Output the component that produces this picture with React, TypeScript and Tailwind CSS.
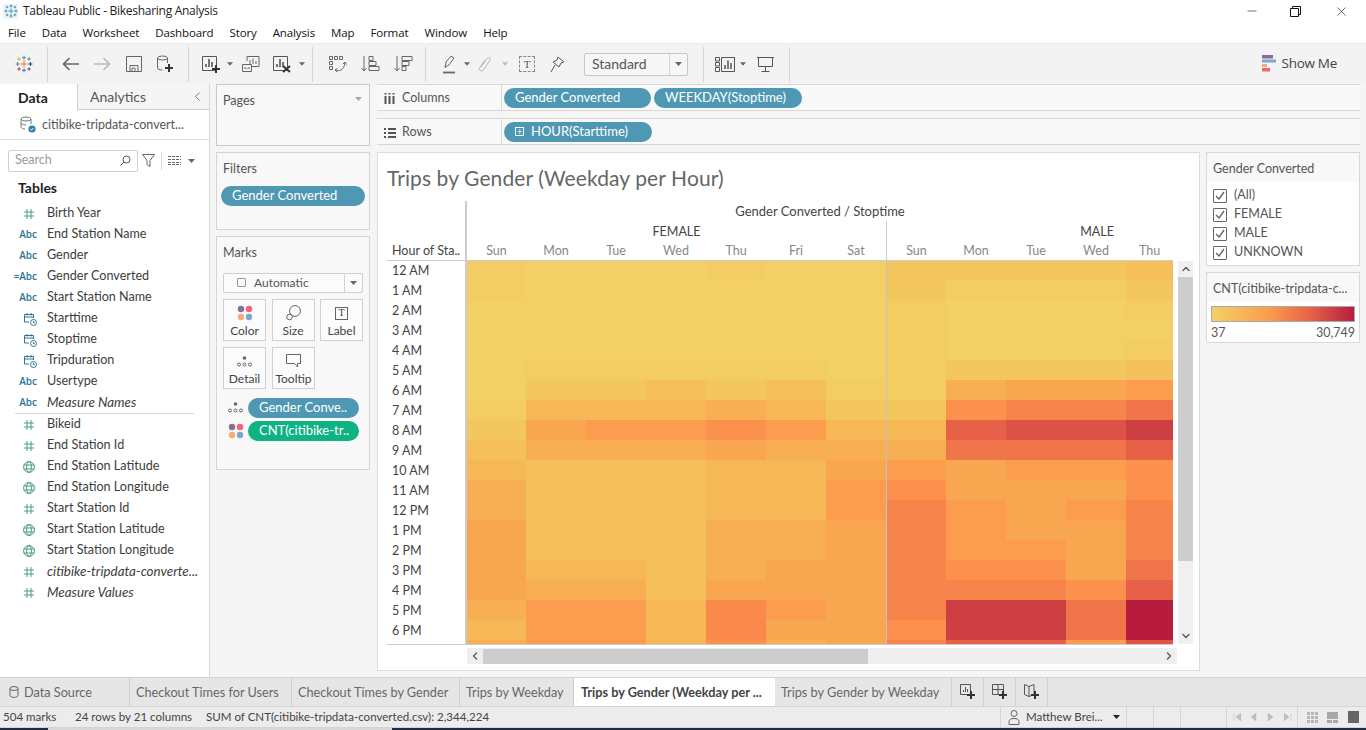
import React from "react";
import { ChevronDown, ChevronLeft, ChevronRight, ChevronUp, Minus, X } from "lucide-react";

// Colour ramp of the heatmap, light to dark
const ramp: Record<string, string> = {
  a: "#f3d066", b: "#f3cc63", c: "#f4c65e", d: "#f5c05a", e: "#f6b756",
  f: "#f8ae53", g: "#f9a650", h: "#fb9c4e", i: "#fb914c", p: "#f98a4c", j: "#f6844b",
  k: "#f0754a", l: "#e66147", m: "#dd5346", n: "#cd3f43", o: "#b71c3e",
};

// One row per hour: 7 female days, then 5 male days
const heat = [
  "baaabaa ccccd", "baaaaaa cbbbc", "aaaaaaa baaab", "aaaaaaa baaaa", "aaaaaaa baaab",
  "abbbbba bcccd", "accdcdb bfggh", "beeefec cijjk", "cghhihe elmmn", "dfffgff fkkkl",
  "edddeeg hghhi", "fdddeeh igggi", "fdddeeh jhghj", "gdddffg jhggj",
  "gdddffg jhhgj", "geedfgg jiigk", "gffdggg jjjil", "fhhephg jnnko", "ehhepgg innko", "fhheifg jllhm",
];

const hours = ["12 AM", "1 AM", "2 AM", "3 AM", "4 AM", "5 AM", "6 AM", "7 AM", "8 AM", "9 AM", "10 AM", "11 AM", "12 PM", "1 PM", "2 PM", "3 PM", "4 PM", "5 PM", "6 PM"];
const femaleW = [59, 60, 60, 60, 60, 60, 60];
const maleW = [59, 60, 60, 60, 47];

const tables: [string, string, boolean?][] = [
  ["num", "Birth Year"], ["abc", "End Station Name"], ["abc", "Gender"], ["calc", "Gender Converted"],
  ["abc", "Start Station Name"], ["date", "Starttime"], ["date", "Stoptime"], ["date", "Tripduration"],
  ["abc", "Usertype"], ["abc", "Measure Names", true],
];
const measures: [string, string, boolean?][] = [
  ["num", "Bikeid"], ["num", "End Station Id"], ["geo", "End Station Latitude"], ["geo", "End Station Longitude"],
  ["num", "Start Station Id"], ["geo", "Start Station Latitude"], ["geo", "Start Station Longitude"],
  ["num", "citibike-tripdata-converte...", true], ["num", "Measure Values", true],
];

const Caret = ({ color = "#666" }: { color?: string }) => (
  <svg width="7" height="4" viewBox="0 0 7 4"><path d="M0 0h7L3.5 4z" fill={color} /></svg>
);

const Dots = () => (
  <svg width="16" height="16" viewBox="0 0 16 16">
    <circle cx="4" cy="4" r="3.2" fill="#8c6d99" />
    <circle cx="12" cy="4" r="3.2" fill="#f0656f" />
    <circle cx="4" cy="12" r="3.2" fill="#f5ab78" />
    <circle cx="12" cy="12" r="3.2" fill="#7ea6cc" />
  </svg>
);

const DetailDots = () => (
  <svg width="15" height="11" viewBox="0 0 15 11" fill="none" stroke="#666">
    <circle cx="7.5" cy="2" r="1.8" fill="#666" stroke="none" />
    <circle cx="2" cy="8.5" r="1.5" />
    <circle cx="7.5" cy="8.5" r="1.5" />
    <circle cx="13" cy="8.5" r="1.5" />
  </svg>
);

const TableauMark = ({ multi = false, size = 18 }: { multi?: boolean; size?: number }) => {
  const crosses: [number, number, number, string][] = [
    [9, 9, 3.4, multi ? "#e8762c" : "#2d7fa8"],
    [9, 2.6, 2, multi ? "#5b879b" : "#2d7fa8"],
    [9, 15.4, 2, multi ? "#4e79a7" : "#2d7fa8"],
    [2.6, 9, 2, multi ? "#59879b" : "#2d7fa8"],
    [15.4, 9, 2, multi ? "#1f3f66" : "#2d7fa8"],
    [4, 4, 1.6, multi ? "#e0a32e" : "#2d7fa8"],
    [14, 4, 1.6, multi ? "#4e7fa8" : "#2d7fa8"],
    [4, 14, 1.6, multi ? "#c72037" : "#2d7fa8"],
    [14, 14, 1.6, multi ? "#5a3f86" : "#2d7fa8"],
  ];
  return (
    <svg width={size} height={size} viewBox="0 0 18 18" strokeWidth="1">
      {crosses.map(([x, y, r, c], i) => (
        <g key={i} stroke={c}>
          <path d={`M${x - r} ${y}h${r * 2}M${x} ${y - r}v${r * 2}`} />
        </g>
      ))}
    </svg>
  );
};

const FieldIcon = ({ type }: { type: string }) => {
  if (type === "abc" || type === "calc") {
    return <span className="text-[10px] font-semibold text-[#2f7493] font-['Open_Sans',sans-serif]">{type === "calc" ? "=Abc" : "Abc"}</span>;
  }
  if (type === "num") {
    return (
      <svg width="10" height="10" viewBox="0 0 10 10" className="mr-[3px]" stroke="#4a9f7f" fill="none">
        <path d="M3 0v10M7 0v10M0 3h10M0 7h10" />
      </svg>
    );
  }
  if (type === "geo") {
    return (
      <svg width="12" height="12" viewBox="0 0 12 12" className="mr-[2px]" stroke="#4a9f7f" fill="none">
        <circle cx="6" cy="6" r="5.4" />
        <ellipse cx="6" cy="6" rx="2.4" ry="5.4" />
        <path d="M.6 4h10.8M.6 8h10.8" />
      </svg>
    );
  }
  return (
    <svg width="14" height="14" viewBox="0 0 14 14" stroke="#2f7493" fill="none">
      <path d="M6 10H1.5V2.5h9V6M1.5 5h9M4 1v2.5M8 1v2.5" />
      <circle cx="10.5" cy="10.5" r="3" />
      <path d="M10.5 9v1.7h1.4" />
    </svg>
  );
};

const FieldRow = ({ type, name, italic }: { type: string; name: string; italic?: boolean }) => (
  <div className="flex h-[21px] items-center">
    <div className="flex w-[37px] justify-end"><FieldIcon type={type} /></div>
    <span className={`ml-[10px] whitespace-nowrap text-[#3d3d3d] ${italic ? "text-[13.4px] italic" : "text-[12.6px]"}`}>{name}</span>
  </div>
);

const Pill = ({ className, children }: { className: string; children: React.ReactNode }) => (
  <div className={`flex h-[20px] items-center rounded-full text-[13px] leading-none text-white ${className}`}>{children}</div>
);

const MarkButton = ({ label, icon }: { label: string; icon: React.ReactNode }) => (
  <div className="flex h-[42px] w-[43px] flex-col items-center border border-[#cfcfcf] bg-[#fbfbfb]">
    <div className="flex h-[24px] items-center pt-[3px]">{icon}</div>
    <span className="text-[12px] leading-[14px] text-[#444]">{label}</span>
  </div>
);

const ToolBtn = ({ className, children }: { className: string; children: React.ReactNode }) => (
  <div className={`flex shrink-0 items-center justify-center ${className}`}>{children}</div>
);

const Sep = ({ className = "" }: { className?: string }) => <div className={`h-[35px] w-px shrink-0 bg-[#d4d4d4] ${className}`} />;

const ChartGlyph = ({ stroke = "#555" }: { stroke?: string }) => (
  <g fill="none" stroke={stroke}>
    <path d="M1.5 1.5h14v14h-14z" />
    <path d="M5 12V9M8 12V4M11 12V7" strokeWidth="1.6" />
  </g>
);

const PlusBadge = ({ x, y }: { x: number; y: number }) => (
  <path d={`M${x - 4} ${y}h8M${x} ${y - 4}v8`} stroke="#333" strokeWidth="2" fill="none" />
);

const Toolbar = () => (
  <div className="flex h-[41px] shrink-0 items-center border-t border-[#ececec] bg-[#f3f3f3] text-[#555]">
    <ToolBtn className="w-[47px]"><TableauMark multi /></ToolBtn>
    <Sep />
    <ToolBtn className="ml-[6px] w-[32px]">
      <svg width="17" height="14" viewBox="0 0 17 14" fill="none" stroke="#666" strokeWidth="1.7"><path d="M17 7H2M7.5 1 1.5 7l6 6" /></svg>
    </ToolBtn>
    <ToolBtn className="w-[32px]">
      <svg width="17" height="14" viewBox="0 0 17 14" fill="none" stroke="#bbb" strokeWidth="1.7"><path d="M0 7h15M9.5 1l6 6-6 6" /></svg>
    </ToolBtn>
    <ToolBtn className="w-[31px]">
      <svg width="16" height="16" viewBox="0 0 16 16" fill="none" stroke="#666"><path d="M.5.5h15v15H.5z" /><path d="M4 15V9.5h8V15M6 15v-3h3v3" /></svg>
    </ToolBtn>
    <ToolBtn className="w-[32px]">
      <svg width="18" height="18" viewBox="0 0 18 18" fill="none" stroke="#666"><ellipse cx="6.5" cy="3" rx="5" ry="2" /><path d="M1.5 3v10c0 1 2 2 5 2M11.5 3v5" /><PlusBadge x={13} y={13} /></svg>
    </ToolBtn>
    <Sep className="ml-[7px]" />
    <ToolBtn className="ml-[5px] w-[33px]">
      <svg width="20" height="18" viewBox="0 0 20 18"><ChartGlyph /><PlusBadge x={15} y={14} /></svg>
    </ToolBtn>
    <ToolBtn className="w-[6px]"><Caret /></ToolBtn>
    <ToolBtn className="ml-[3px] w-[30px]">
      <svg width="18" height="16" viewBox="0 0 18 16" fill="none" stroke="#666"><path d="M5 5V.5h12v10H10" /><path d="M8 8V4M11 8V2.5M14 8V5" /><path d="M.5 8.5h9v7h-9zM3 13v-2M5 13v-1M7 13v-2" /></svg>
    </ToolBtn>
    <ToolBtn className="w-[31px]">
      <svg width="20" height="18" viewBox="0 0 20 18"><ChartGlyph /><path d="m11 11 7 6m0-6-7 6" stroke="#333" strokeWidth="2" fill="none" /></svg>
    </ToolBtn>
    <ToolBtn className="ml-[2px] w-[6px]"><Caret /></ToolBtn>
    <Sep className="ml-[7px]" />
    <ToolBtn className="ml-[9px] w-[32px]">
      <svg width="18" height="17" viewBox="0 0 18 17" fill="none" stroke="#666"><path d="M.5.5h3v3h-3zM5.5.5h3v3h-3zM10.5.5h3v3h-3zM.5 5.5h3v3h-3zM.5 10.5h3v3h-3z" /><path d="M6 14c4 2 9 0 10-7M14 8l2-2 1.5 2.5M6 14l2.5-1.5M6 14l2 2" /></svg>
    </ToolBtn>
    <ToolBtn className="w-[33px]">
      <svg width="19" height="16" viewBox="0 0 19 16" fill="none" stroke="#666"><path d="M3 0v15M.5 12 3 15l2.5-3M8 .5h4v4H8zM8 5.5h7v4H8zM8 10.5h10v4H8z" /></svg>
    </ToolBtn>
    <ToolBtn className="w-[33px]">
      <svg width="19" height="16" viewBox="0 0 19 16" fill="none" stroke="#666"><path d="M3 0v15M.5 12 3 15l2.5-3M8 .5h10v4H8zM8 5.5h7v4H8zM8 10.5h4v4H8z" /></svg>
    </ToolBtn>
    <Sep className="ml-[5px]" />
    <ToolBtn className="ml-[8px] w-[30px]">
      <svg width="13" height="19" viewBox="0 0 13 19" fill="none" stroke="#666"><path d="m2 12 1-5 5-6 3 2-5 7zM2 12l1 1" /><path d="M0 17.5h12" strokeWidth="1.8" /></svg>
    </ToolBtn>
    <ToolBtn className="w-[6px]"><Caret /></ToolBtn>
    <ToolBtn className="ml-[2px] w-[26px]">
      <svg width="14" height="18" viewBox="0 0 14 18" fill="none" stroke="#b5b5b5"><path d="M3 12 9 3.5c1.5-2 4-.5 3 1.5L5.5 15c-1.5 2-5 .5-4-2L7 5" /></svg>
    </ToolBtn>
    <ToolBtn className="ml-[4px] w-[6px]"><Caret color="#bbb" /></ToolBtn>
    <ToolBtn className="ml-[5px] w-[28px]">
      <span className="flex h-[16px] w-[16px] items-center justify-center border border-dashed border-[#888] font-['Liberation_Serif',serif] text-[11px] leading-none text-[#555]">T</span>
    </ToolBtn>
    <ToolBtn className="ml-[1px] w-[30px]">
      <svg width="15" height="17" viewBox="0 0 15 17" fill="none" stroke="#555"><path d="m8 1 6 5-3 1-2 4-6-5 4-2zM5 9l-4 7" /></svg>
    </ToolBtn>
    <div className="ml-[12px] flex h-[23px] w-[104px] shrink-0 items-center rounded-[2px] border border-[#c8c8c8] bg-[#f6f6f6]">
      <span className="flex-1 pb-[2px] pl-[7px] text-[14px] text-[#555]">Standard</span>
      <div className="flex h-full w-[18px] items-center justify-center border-l border-[#d4d4d4]"><Caret /></div>
    </div>
    <Sep className="ml-[15px]" />
    <ToolBtn className="ml-[10px] w-[21px]">
      <svg width="20" height="15" viewBox="0 0 20 15" fill="none" stroke="#555"><path d="M.5.5h4v3.5h-4zM.5 5.5h4V9h-4zM.5 10.5h4v4h-4zM6.5.5h13v14h-13z" /><path d="M10 12V8M13 12V3.5M16 12V6" strokeWidth="1.5" /></svg>
    </ToolBtn>
    <ToolBtn className="ml-[5px] w-[6px]"><Caret /></ToolBtn>
    <ToolBtn className="ml-[4px] w-[30px]">
      <svg width="17" height="16" viewBox="0 0 17 16" fill="none" stroke="#555"><path d="M0 1.5h17M1.5 1.5v9h14v-9M8.5 10.5V15M4.5 15.5h8" /></svg>
    </ToolBtn>
    <Sep className="ml-[9px]" />
    <div className="ml-auto mr-[29px] flex items-center gap-[6px] pb-[1px]">
      <svg width="14" height="17" viewBox="0 0 14 17">
        <rect width="11" height="3.5" fill="#8c6d99" />
        <rect y="4.5" width="14" height="3" fill="#7ea6cc" />
        <rect y="9" width="5" height="3" fill="#f5ab78" />
        <rect y="13" width="8" height="3.5" fill="#f0656f" />
      </svg>
      <span className="text-[13.5px] text-[#444] font-['Open_Sans',sans-serif] tracking-[-0.3px]">Show Me</span>
    </div>
  </div>
);

const DataPane = () => (
  <aside className="flex w-[210px] shrink-0 flex-col border-r border-[#d8d8d8] bg-white">
    <div className="flex h-[26px] shrink-0">
      <div className="flex w-[77px] items-center pl-[18px] text-[14px] font-bold text-[#222]">Data</div>
      <div className="flex flex-1 items-center justify-between border-b border-l border-[#d0d0d0] bg-[#f5f5f5] pl-[12px] pr-[4px] text-[14px] text-[#555]">
        Analytics
        <ChevronLeft size={15} strokeWidth={1.4} color="#666" />
      </div>
    </div>
    <div className="flex h-[30px] shrink-0 items-center border-b border-[#e2e2e2] pl-[20px]">
      <svg width="16" height="17" viewBox="0 0 16 17" fill="none" stroke="#777">
        <ellipse cx="6" cy="3" rx="5" ry="2" />
        <path d="M1 3v8c0 1 2 2 4 2M11 3v5M1 7c0 1 2 2 5 2" />
        <circle cx="12" cy="13" r="3.6" fill="#2f7fa6" stroke="none" />
        <path d="m10.3 13 1.2 1.2 2-2.2" stroke="#fff" />
      </svg>
      <span className="ml-[6px] whitespace-nowrap pt-[1px] text-[12.5px] text-[#555]">citibike-tripdata-convert...</span>
    </div>
    <div className="ml-[8px] mt-[9px] flex h-[23px] shrink-0 items-center">
      <div className="flex h-[22px] w-[130px] items-center justify-between rounded-[2px] border border-[#cfcfcf] pl-[6px] pr-[6px] text-[12.5px] text-[#9a9a9a]">
        Search
        <svg width="11" height="11" viewBox="0 0 11 11" fill="none" stroke="#555"><circle cx="6.5" cy="4.5" r="3.5" /><path d="M4 7 .5 10.5" /></svg>
      </div>
      <svg className="ml-[4px]" width="13" height="13" viewBox="0 0 13 13" fill="none" stroke="#666"><path d="M.5.5h12L8 6.5v6l-3-2v-4z" /></svg>
      <div className="ml-[6px] h-[18px] w-px bg-[#d8d8d8]" />
      <svg className="ml-[6px]" width="13" height="9" viewBox="0 0 13 9" stroke="#666" fill="none" strokeDasharray="3 1"><path d="M0 .5h13M0 3.5h13M0 6.5h13M0 8.5h13" /></svg>
      <div className="ml-[7px]"><Caret /></div>
    </div>
    <div className="ml-[18px] mt-[5px] h-[22px] text-[14px] font-bold leading-[22px] text-[#222]">Tables</div>
    <div className="mt-[4px]">
      {tables.map(([t, n, it]) => <FieldRow key={n} type={t} name={n} italic={it} />)}
    </div>
    <div className="mx-[15px] h-px bg-[#dcdcdc]" />
    <div>
      {measures.map(([t, n, it]) => <FieldRow key={n} type={t} name={n} italic={it} />)}
    </div>
  </aside>
);

const SideColumn = () => (
  <div className="ml-[6px] flex w-[154px] shrink-0 flex-col gap-[6px]">
    <div className="flex h-[62px] items-start justify-between border border-[#c8c8c8] bg-[#f8f8f8] pl-[6px] pr-[7px] pt-[7px] text-[12.5px] text-[#555]">
      Pages
      <div className="mt-[5px]"><Caret color="#aaa" /></div>
    </div>
    <div className="h-[78px] border border-[#d4d4d4] bg-[#f8f8f8] pl-[4px] pr-[4px] pt-[7px]">
      <div className="pl-[2px] text-[12.5px] text-[#555]">Filters</div>
      <Pill className="mt-[7px] bg-[#4e98b4] pl-[11px]">Gender Converted</Pill>
    </div>
    <div className="h-[234px] border border-[#d4d4d4] bg-[#f8f8f8] pl-[6px] pt-[7px]">
      <div className="text-[12.5px] text-[#555]">Marks</div>
      <div className="mt-[10px] flex h-[20px] w-[140px] items-center rounded-[2px] border border-[#cfcfcf] bg-[#fbfbfb]">
        <div className="ml-[13px] h-[9px] w-[9px] rounded-[1px] border border-[#999]" />
        <span className="ml-[8px] flex-1 text-[12px] text-[#555]">Automatic</span>
        <div className="flex h-full w-[18px] items-center justify-center border-l border-[#d4d4d4]"><Caret /></div>
      </div>
      <div className="mt-[6px] flex gap-[5.5px]">
        <MarkButton label="Color" icon={<Dots />} />
        <MarkButton label="Size" icon={
          <svg width="15" height="16" viewBox="0 0 15 16" fill="none" stroke="#666"><circle cx="9" cy="6" r="5.4" /><circle cx="3.5" cy="12" r="2.8" fill="#fbfbfb" /></svg>
        } />
        <MarkButton label="Label" icon={
          <span className="flex h-[13px] w-[13px] items-center justify-center border border-[#666] font-['Liberation_Serif',serif] text-[10px] leading-none text-[#444]">T</span>
        } />
      </div>
      <div className="mt-[6px] flex gap-[6px]">
        <MarkButton label="Detail" icon={<DetailDots />} />
        <MarkButton label="Tooltip" icon={
          <svg width="15" height="14" viewBox="0 0 15 14" fill="none" stroke="#666"><path d="M.5.5h14v9h-3v3.5l-3-3.5h-8z" /></svg>
        } />
      </div>
      <div className="mt-[9px] flex items-center">
        <div className="flex w-[25px] justify-center"><DetailDots /></div>
        <Pill className="w-[111px] bg-[#4e98b4] pl-[11px]">Gender Conve..</Pill>
      </div>
      <div className="mt-[3px] flex items-center">
        <div className="flex w-[25px] justify-center"><Dots /></div>
        <Pill className="w-[111px] bg-[#0fb383] pl-[11px]">CNT(citibike-tr..</Pill>
      </div>
    </div>
  </div>
);

const Shelf = ({ label, icon, children }: { label: string; icon: React.ReactNode; children: React.ReactNode }) => (
  <div className="flex h-[27px] items-center border-y border-[#d8d8d8] bg-[#f8f8f8]">
    <div className="flex h-full w-[125px] items-center border-r border-[#d8d8d8] pl-[7px] pt-[2px] text-[12.5px] text-[#555]">
      <div className="w-[18px]">{icon}</div>
      {label}
    </div>
    <div className="flex gap-[3px] pl-[2px]">{children}</div>
  </div>
);

const Heatmap = () => (
  <div className="w-[706px] overflow-hidden">
    {heat.map((row, r) => {
      const [f, m] = row.split(" ");
      return (
        <div key={r} className={`flex ${r === 19 ? "h-[4px]" : r === 0 ? "h-[19px]" : "h-[20px]"}`}>
          {femaleW.map((w, i) => (
            <div key={i} style={{ width: w, backgroundColor: ramp[f[i]] }} />
          ))}
          <div className="w-px bg-[#bcc4c9]" />
          {maleW.map((w, i) => (
            <div key={i} style={{ width: w, backgroundColor: ramp[m[i]] }} />
          ))}
        </div>
      );
    })}
  </div>
);

const Chart = () => (
  <div className="h-[519px] border border-[#dcdcdc] bg-white pl-[9px]">
    <div className="flex h-[48px] items-start pt-[10px] text-[21px] leading-[30px] tracking-[0.1px] text-[#666]">Trips by Gender (Weekday per Hour)</div>
    <div className="flex">
      <div className="w-[78px] shrink-0">
        <div className="flex h-[60px] items-end">
          <div className="flex h-[20px] w-full items-center whitespace-nowrap border-b border-[#cdcdcd] pl-[5px] pt-[2px] text-[12.5px] text-[#444]">Hour of Sta..</div>
        </div>
        {hours.map((h, i) => (
          <div key={h} className={`flex items-center pl-[5px] pt-[2px] text-[12.5px] text-[#444] ${i === 0 ? "h-[19px]" : "h-[20px]"}`}>{h}</div>
        ))}
        <div className="h-[5px] border-b border-[#cdcdcd]" />
      </div>
      <div className="w-[708px] shrink-0 border-l-2 border-[#c9cdd0]">
        <div className="w-[706px]">
          <div className="flex h-[20px] items-center justify-center pt-[2px] text-[13px] text-[#444]">Gender Converted / Stoptime</div>
          <div className="flex h-[20px]">
            <div className="flex w-[419px] items-center justify-center pt-[2px] text-[12.5px] text-[#444]">FEMALE</div>
            <div className="flex flex-1 items-center justify-start overflow-hidden border-l border-[#cdcdcd] pt-[2px] text-[12.5px] text-[#444]">
              <span className="w-[420px] shrink-0 text-center">MALE</span>
            </div>
          </div>
          <div className="flex h-[20px] border-b border-[#cdcdcd]">
            {["Sun", "Mon", "Tue", "Wed", "Thu", "Fri", "Sat"].map((d, i) => (
              <div key={d} style={{ width: femaleW[i] }} className="flex items-center justify-center pt-[2px] text-[12.5px] text-[#888]">{d}</div>
            ))}
            <div className="w-px bg-[#cdcdcd]" />
            {["Sun", "Mon", "Tue", "Wed", "Thu"].map((d, i) => (
              <div key={d} style={{ width: maleW[i] }} className="flex items-center justify-center pt-[2px] text-[12.5px] text-[#888]">{d}</div>
            ))}
          </div>
          <Heatmap />
          <div className="h-px bg-[#cdcdcd]" />
        </div>
      </div>
      <div className="ml-[5px] mt-[60px] flex h-[383px] w-[15px] shrink-0 flex-col items-center bg-[#f0f0f0]">
        <div className="flex h-[16px] items-center"><ChevronUp size={12} strokeWidth={3} color="#606060" /></div>
        <div className="h-[284px] w-full bg-[#cdcdcd]" />
        <div className="mt-auto flex h-[16px] items-center"><ChevronDown size={12} strokeWidth={3} color="#606060" /></div>
      </div>
    </div>
    <div className="ml-[80px] mt-[3px] flex h-[16px] w-[710px] items-center bg-[#efefef]">
      <div className="flex w-[16px] items-center justify-center"><ChevronLeft size={12} strokeWidth={3} color="#606060" /></div>
      <div className="h-[15px] w-[385px] bg-[#cdcdcd]" />
      <div className="ml-auto flex w-[16px] items-center justify-center"><ChevronRight size={12} strokeWidth={3} color="#606060" /></div>
    </div>
  </div>
);

const Legends = () => (
  <div className="ml-[6px] flex w-[154px] shrink-0 flex-col gap-[6px]">
    <div className="h-[114px] border border-[#d8d8d8] bg-white">
      <div className="flex h-[29px] items-center bg-[#f8f8f8] pl-[6px] pt-[3px] text-[12.5px] text-[#555]">Gender Converted</div>
      <div className="pl-[6px] pt-[4px]">
        {["(All)", "FEMALE", "MALE", "UNKNOWN"].map((v) => (
          <div key={v} className="flex h-[19px] items-center">
            <div className="flex h-[14px] w-[14px] items-center justify-center rounded-[1px] border border-[#666]">
              <svg width="10" height="9" viewBox="0 0 10 9" fill="none" stroke="#666" strokeWidth="1.4"><path d="m1 5 3 3 5-7" /></svg>
            </div>
            <span className="ml-[7px] text-[12.5px] text-[#555]">{v}</span>
          </div>
        ))}
      </div>
    </div>
    <div className="h-[71px] border border-[#d8d8d8] bg-white">
      <div className="flex h-[29px] items-center whitespace-nowrap bg-[#f8f8f8] pl-[6px] pt-[3px] text-[12.5px] text-[#555]">CNT(citibike-tripdata-c...</div>
      <div className="ml-[4px] mt-[4px] h-[16px] w-[144px] border border-[#aaa] bg-[linear-gradient(to_right,#f3d066,#fb9c4e_40%,#e66147_70%,#b71c3e)]" />
      <div className="ml-[4px] flex w-[144px] justify-between text-[12.5px] leading-[22px] text-[#555]">
        <span>37</span><span>30,749</span>
      </div>
    </div>
  </div>
);

const tabs = [
  { name: "Checkout Times for Users", w: "w-[162px]" },
  { name: "Checkout Times by Gender", w: "w-[168px]" },
  { name: "Trips by Weekday", w: "w-[114px]" },
];

const TabBar = () => (
  <div className="flex h-[30px] shrink-0 border-y border-[#d4d4d4] bg-[#e6e6e6] text-[12.7px] text-[#666]">
    <div className="flex w-[130px] items-center border-r border-[#cfcfcf] pl-[9px]">
      <svg width="10" height="12" viewBox="0 0 10 12" fill="none" stroke="#666"><ellipse cx="5" cy="2.5" rx="4" ry="2" /><path d="M1 2.5v7c0 2.5 8 2.5 8 0v-7" /></svg>
      <span className="ml-[5px] pt-[1px]">Data Source</span>
    </div>
    {tabs.map((t) => (
      <div key={t.name} className={`flex items-center whitespace-nowrap border-r border-[#cfcfcf] pl-[6px] pt-[1px] ${t.w}`}>{t.name}</div>
    ))}
    <div className="flex w-[201px] items-center whitespace-nowrap bg-white pl-[7px] pt-[1px] font-bold text-[#444]">Trips by Gender (Weekday per ...</div>
    <div className="flex w-[177px] items-center whitespace-nowrap border-r border-[#cfcfcf] pl-[6px] pt-[1px]">Trips by Gender by Weekday</div>
    <div className="flex w-[32px] items-center justify-center border-r border-[#cfcfcf]">
      <svg width="16" height="16" viewBox="0 0 16 16" fill="none" stroke="#555"><path d="M.5.5h10v10H.5zM3.5 8V6M5.5 8V3M7.5 8V5" /><PlusBadge x={11} y={11} /></svg>
    </div>
    <div className="flex w-[32px] items-center justify-center border-r border-[#cfcfcf]">
      <svg width="16" height="16" viewBox="0 0 16 16" fill="none" stroke="#555"><path d="M.5.5h11v10H.5zM.5 5.5h11M6 .5v10" /><PlusBadge x={11} y={11} /></svg>
    </div>
    <div className="flex w-[32px] items-center justify-center border-r border-[#cfcfcf]">
      <svg width="16" height="16" viewBox="0 0 16 16" fill="none" stroke="#555"><path d="M.5.5 5 2.5 10 .5v10L5 12.5.5 10.5zM5 2.5v10" /><PlusBadge x={11} y={11} /></svg>
    </div>
  </div>
);

const StatusBar = () => (
  <div className="flex h-[21px] shrink-0 items-center border-b border-[#d4d4d4] bg-[#ececec] text-[11.55px] text-[#444]">
    <span className="ml-[3px] w-[72px]">504 marks</span>
    <span className="w-[131px]">24 rows by 21 columns</span>
    <span className="w-[794px] whitespace-nowrap">SUM of CNT(citibike-tripdata-converted.csv): 2,344,224</span>
    <div className="flex h-full w-[127px] items-center border-x border-[#d4d4d4] pl-[7px]">
      <svg width="12" height="15" viewBox="0 0 12 15" fill="none" stroke="#666"><circle cx="6" cy="3.5" r="3" /><path d="M1 14.5v-3c0-2 2-3 5-3s5 1 5 3v3z" /></svg>
      <span className="ml-[6px] w-[87px] whitespace-nowrap">Matthew Brei...</span>
      <Caret color="#222" />
    </div>
    <div className="h-full w-[27px] border-r border-[#d4d4d4]" />
    <div className="h-full w-[27px] border-r border-[#d4d4d4]" />
    <div className="h-full w-[46px] border-r border-[#d4d4d4]" />
    <div className="flex h-full w-[71px] items-center justify-center gap-[9px] border-r border-[#d4d4d4]">
      {["M1 0v8M8 0v8L3 4z", "M6 0v8L1 4z", "M1 0v8l5-4z", "M0 0v8l5-4zM7 0v8"].map((d) => (
        <svg key={d} width="8" height="8" viewBox="0 0 8 8"><path d={d} fill="#bdbdbd" stroke="#bdbdbd" strokeWidth="0.5" /></svg>
      ))}
    </div>
    <div className="ml-[9px] grid h-[11px] w-[11px] grid-cols-3 gap-px">
      {Array.from({ length: 9 }).map((_, i) => <div key={i} className="bg-[#b5b5b5]" />)}
    </div>
    <div className="ml-[9px] flex h-[11px] w-[11px] flex-col gap-px">
      <div className="h-[7px] bg-[#a8a8a8]" />
      <div className="flex h-[3px] gap-px"><div className="flex-1 bg-[#a8a8a8]" /><div className="flex-1 bg-[#a8a8a8]" /></div>
    </div>
    <div className="ml-[10px] h-[12px] w-[11px] bg-[#666]" />
  </div>
);

const App = () => {
  return (
    <div className="flex h-[730px] w-[1366px] flex-col overflow-hidden bg-[#f5f5f5] font-['Lato',sans-serif]">
      <div className="flex h-[22px] shrink-0 items-center bg-white pl-[3px] font-['Open_Sans',sans-serif]">
        <div className="flex h-[15px] w-[15px] items-center justify-center bg-[#eaf3f7]"><TableauMark size={14} /></div>
        <span className="ml-[5px] text-[12px] tracking-[-0.28px] text-[#222]">Tableau Public - Bikesharing Analysis</span>
        <div className="ml-auto flex items-center">
          <Minus size={14} strokeWidth={1} color="#111" />
          <svg className="ml-[31px]" width="11" height="11" viewBox="0 0 11 11" fill="none" stroke="#111"><path d="M.5 2.5h8v8h-8zM2.5 2.5v-2h8v8h-2" /></svg>
          <X className="ml-[33px] mr-[17px]" size={15} strokeWidth={1} color="#111" />
        </div>
      </div>
      <div className="flex h-[21px] shrink-0 items-center gap-[16px] bg-white pl-[8px] font-['Open_Sans',sans-serif] text-[11.5px] tracking-[-0.12px] text-[#111]">
        {["File", "Data", "Worksheet", "Dashboard", "Story", "Analysis", "Map", "Format", "Window", "Help"].map((m) => (
          <span key={m}>{m}</span>
        ))}
      </div>
      <Toolbar />
      <div className="flex h-[593px] shrink-0">
        <DataPane />
        <SideColumn />
        <div className="ml-[7px] flex w-[983px] shrink-0 flex-col gap-[7px]">
          <div className="flex flex-col gap-[7px]">
            <Shelf label="Columns" icon={
              <svg width="11" height="11" viewBox="0 0 11 11" stroke="#555" strokeWidth="2" fill="none"><path d="M1.5 3v8M5.5 3v8M9.5 3v8M1.5 0v1.5M5.5 0v1.5M9.5 0v1.5" /></svg>
            }>
              <Pill className="w-[147px] bg-[#4e98b4] pl-[11px]">Gender Converted</Pill>
              <Pill className="w-[148px] bg-[#4e98b4] pl-[11px]">WEEKDAY(Stoptime)</Pill>
            </Shelf>
            <Shelf label="Rows" icon={
              <svg width="12" height="10" viewBox="0 0 12 10" stroke="#555" strokeWidth="2" fill="none"><path d="M0 1h2M4 1h8M0 5h2M4 5h8M0 9h2M4 9h8" /></svg>
            }>
              <Pill className="w-[148px] bg-[#4e98b4] pl-[11px]">
                <span className="mr-[7px] flex h-[9px] w-[9px] items-center justify-center border border-white text-[9px] leading-none">+</span>
                HOUR(Starttime)
              </Pill>
            </Shelf>
          </div>
          <div className="flex">
            <div className="w-[823px] shrink-0"><Chart /></div>
            <Legends />
          </div>
        </div>
      </div>
      <TabBar />
      <StatusBar />
      <div className="flex h-[2px] shrink-0">
        <div className="w-[48px] bg-[#1d2a44]" />
        <div className="w-[344px] bg-[#d8d8d8]" />
        <div className="flex-1 bg-[#1d2a44]" />
      </div>
    </div>
  );
};

export default App;
